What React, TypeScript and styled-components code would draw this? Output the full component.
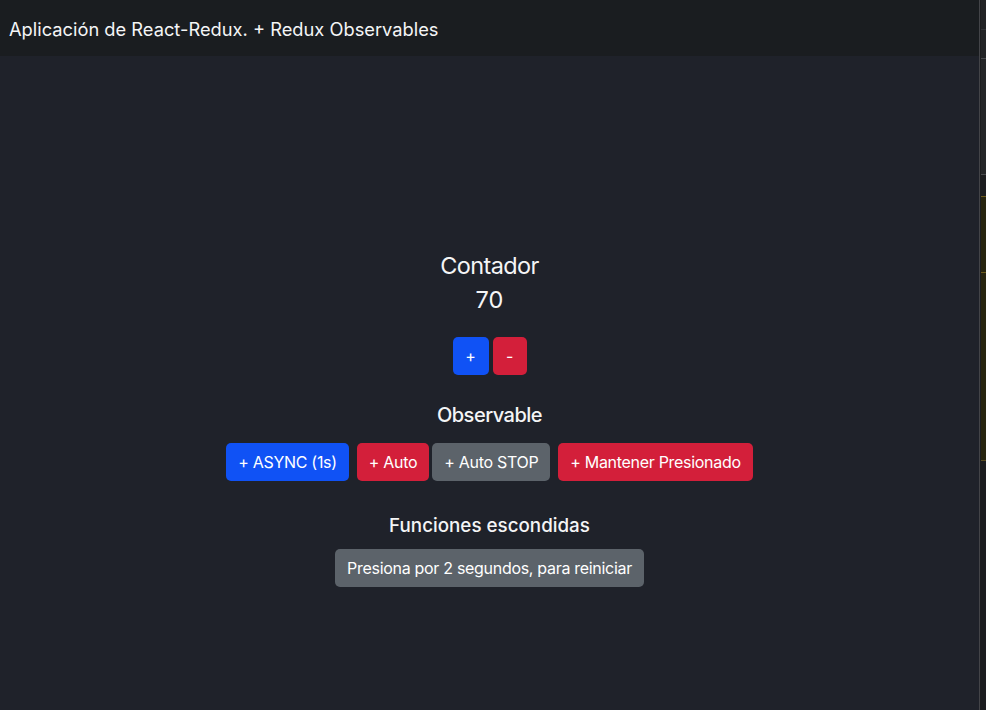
import * as React from 'react';
import styled, { createGlobalStyle } from 'styled-components';

const GlobalStyle = createGlobalStyle`
  html, body {
    margin: 0;
    padding: 0;
    background: #1e2129;
  }
  body {
    font-family: Inter, "Noto Sans", "Liberation Sans", sans-serif;
    color: #f1f2f4;
  }
  * { box-sizing: border-box; }
`

const Page = styled.div`
  display: flex;
  width: 986px;
  height: 710px;
  overflow: hidden;
`
const Main = styled.div`
  flex: 0 0 979px;
  display: flex;
  flex-direction: column;
  background: #1f222a;
`
const Navbar = styled.header`
  height: 56px;
  flex: 0 0 56px;
  display: flex;
  align-items: center;
  padding: 1px 0 0 9px;
  background: #1a1d20;
  font-size: 18.3px;
  line-height: 22px;
  color: #f4f5f6;
`
const Content = styled.main`
  flex: 1;
  display: flex;
  flex-direction: column;
  align-items: center;
  padding-top: 196px;
`
const Heading = styled.h4<{ $size: number; $mt?: number; $weight?: number; $track?: number }>`
  margin: ${p => p.$mt ?? 0}px 0 0 0;
  font-weight: ${p => p.$weight ?? 400};
  font-size: ${p => p.$size}px;
  line-height: ${p => Math.round(p.$size * 1.2)}px;
  letter-spacing: ${p => p.$track ?? 0}px;
  color: #f4f5f6;
`
const Row = styled.div<{ $mt: number; $gap: number }>`
  display: flex;
  justify-content: center;
  gap: ${p => p.$gap}px;
  margin-top: ${p => p.$mt}px;
`
const Group = styled.div`
  display: flex;
  gap: 3px;
`

const colors = {
  primary: '#1052f5',
  danger: '#d31f3a',
  secondary: '#5c636a',
}

const Btn = styled.button<{ $variant: keyof typeof colors; $w?: number }>`
  height: 38px;
  ${p => (p.$w ? `width: ${p.$w}px;` : '')}
  padding: 0 12px;
  border: none;
  border-radius: 5px;
  background: ${p => colors[p.$variant]};
  color: #ffffff;
  font-family: inherit;
  font-size: 16px;
  line-height: 24px;
  letter-spacing: -0.3px;
  white-space: nowrap;
  cursor: pointer;
`

const Strip = styled.aside`
  flex: 0 0 7px;
  border-left: 1px solid #434448;
  background: #1c1d1f;
  padding-left: 1px;
  display: flex;
  flex-direction: column;
`
const StripPart = styled.div<{ $h: number; $bg: string; $line?: string }>`
  flex: 0 0 ${p => p.$h}px;
  background: ${p => p.$bg};
  border-top: 1px solid ${p => p.$line ?? 'transparent'};
`

const App = () => {
  const [count, setCount] = React.useState(70)

  return (
    <Page>
      <GlobalStyle />
      <Main>
        <Navbar>Aplicación de React-Redux. + Redux Observables</Navbar>
        <Content>
          <Heading $size={23.5} $track={-0.6}>Contador</Heading>
          <Heading $size={23.5} $mt={6}>{count}</Heading>
          <Row $mt={23} $gap={4}>
            <Btn $variant="primary" $w={36} onClick={() => setCount(count + 1)}>+</Btn>
            <Btn $variant="danger" $w={34} onClick={() => setCount(count - 1)}>-</Btn>
          </Row>
          <Heading $size={20} $mt={28} $weight={500} $track={-0.5}>Observable</Heading>
          <Row $mt={16} $gap={8}>
            <Btn $variant="primary">+ ASYNC (1s)</Btn>
            <Group>
              <Btn $variant="danger">+ Auto</Btn>
              <Btn $variant="secondary">+ Auto STOP</Btn>
            </Group>
            <Btn $variant="danger">+ Mantener Presionado</Btn>
          </Row>
          <Heading $size={18.8} $mt={33} $weight={500}>Funciones escondidas</Heading>
          <Row $mt={12} $gap={0}>
            <Btn $variant="secondary">Presiona por 2 segundos, para reiniciar</Btn>
          </Row>
        </Content>
      </Main>
      <Strip>
        <StripPart $h={29} $bg="#222325" />
        <StripPart $h={29} $bg="#232426" $line="#333437" />
        <StripPart $h={116} $bg="#252628" $line="#4a4b4e" />
        <StripPart $h={22} $bg="#1c1d1f" $line="#4a4b4e" />
        <StripPart $h={76} $bg="#27240f" $line="#6b5a1c" />
        <StripPart $h={188} $bg="#27240f" $line="#6b5a1c" />
        <StripPart $h={250} $bg="#1c1d1f" $line="#5a4d22" />
      </Strip>
    </Page>
  )
}

export default App
